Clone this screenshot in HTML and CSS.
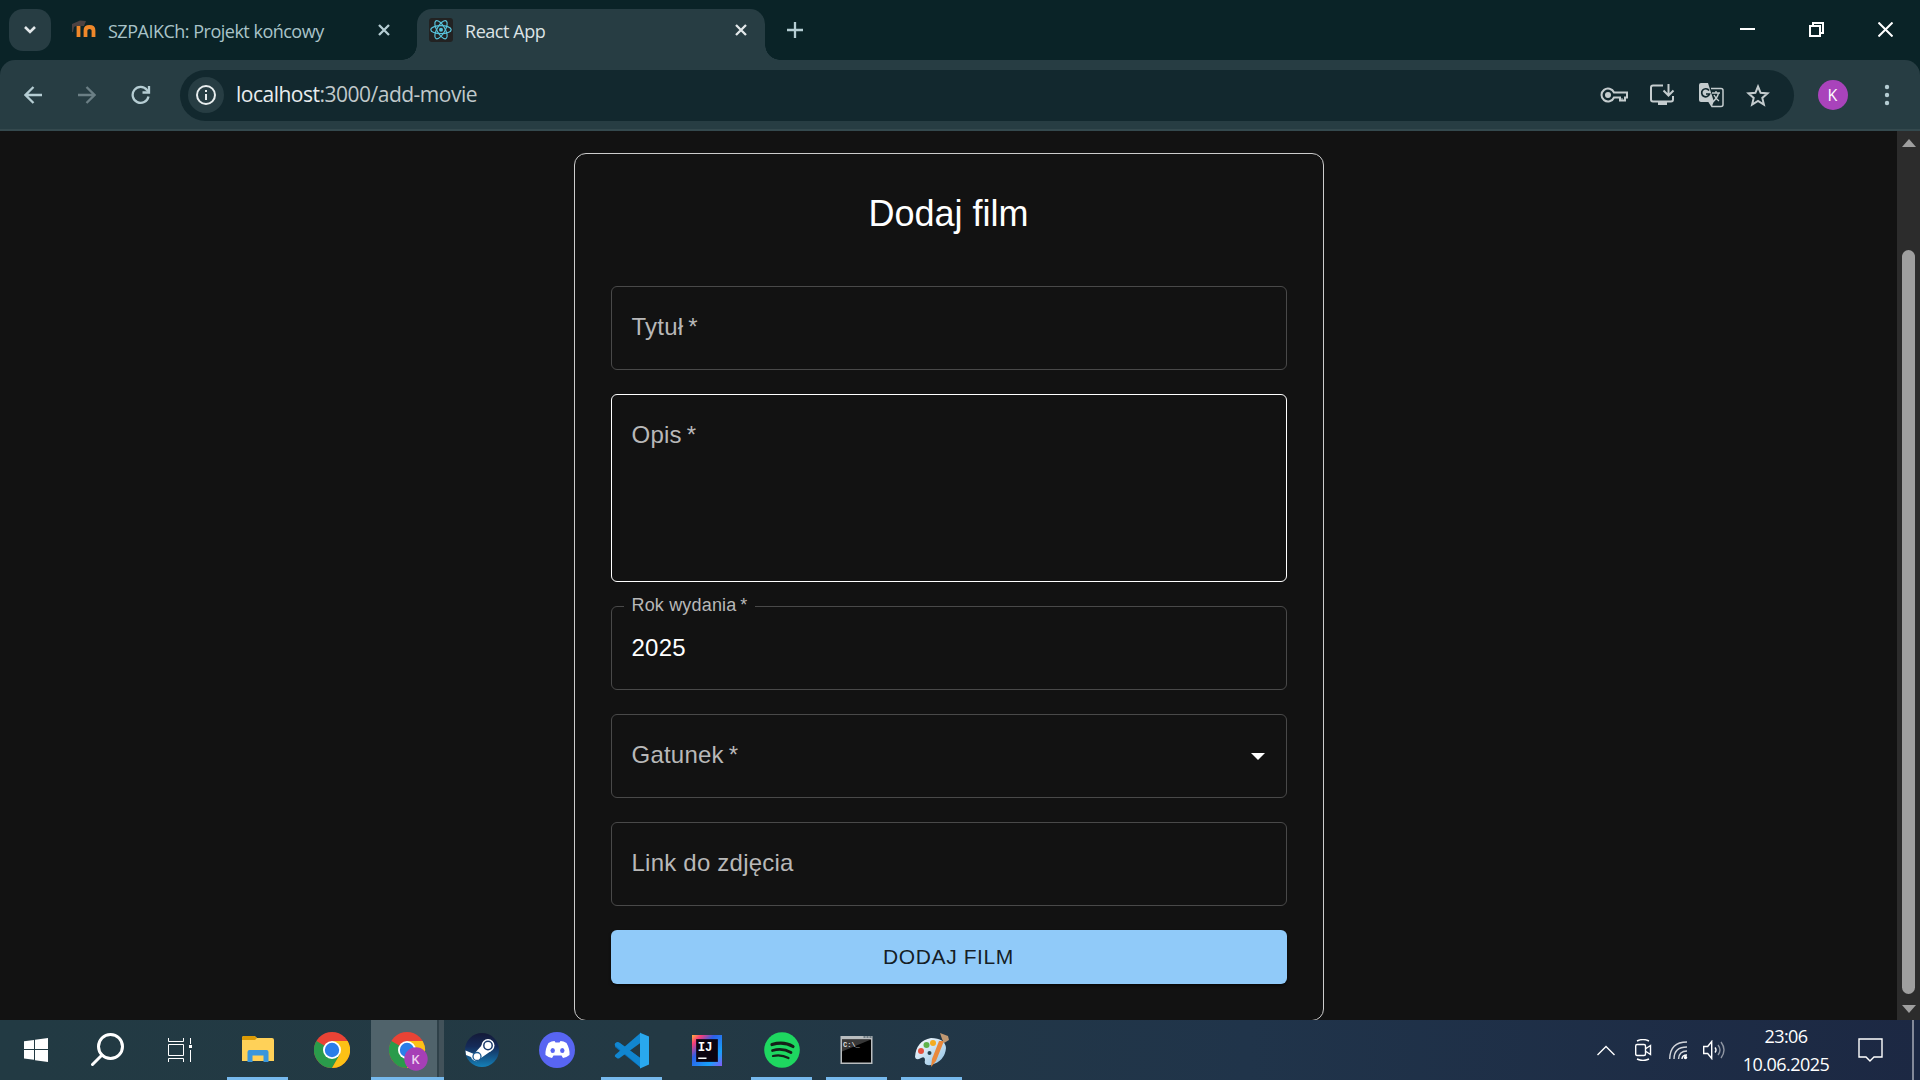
FILE: index.html
```html
<!DOCTYPE html>
<html lang="pl">
<head>
<meta charset="utf-8">
<title>React App</title>
<link rel="stylesheet" href="styles.css">
</head>
<body>
<header class="tabs">
  <div class="tab-search"><svg width="14" height="10" viewBox="0 0 14 10"><path d="M2 2l5 5 5-5" class="ln b"/></svg></div>
  <div class="tab">
    <svg width="26" height="24" viewBox="0 0 26 24"><path d="M7.500 19V8M14.500 19v-6.500q0-3.500 4-3.500t4 3.500V19" fill="none" stroke="#f0882a" stroke-width="3.800"/><path d="M1 6l8-3.500 6 .5-2 5H5l-2 1-1 5H1z" fill="#4c4242"/></svg>
    <span class="tab-name first">SZPAIKCh: Projekt końcowy</span>
    <svg class="x" width="12" height="12" viewBox="0 0 12 12"><path d="M1 1l10 10M11 1L1 11" class="ln"/></svg>
  </div>
  <div class="tab active">
    <svg class="react" width="24" height="24" viewBox="0 0 24 24"><rect width="24" height="24" rx="3" fill="#222"/><g fill="none" stroke="#58c4dc" stroke-width="1.200"><ellipse cx="12" cy="11.700" rx="10.200" ry="4"/><ellipse cx="12" cy="11.700" rx="10.200" ry="4" transform="rotate(60 12 11.700)"/><ellipse cx="12" cy="11.700" rx="10.200" ry="4" transform="rotate(120 12 11.700)"/></g><circle cx="12" cy="11.700" r="2" fill="#58c4dc"/></svg>
    <span class="tab-name second">React App</span>
    <svg class="x" width="12" height="12" viewBox="0 0 12 12"><path d="M1 1l10 10M11 1L1 11" class="ln w"/></svg>
  </div>
  <svg class="plus" width="16" height="16" viewBox="0 0 16 16"><path d="M8 0v16M0 8h16" class="ln"/></svg>
  <div class="win">
    <svg width="15" height="16" viewBox="0 0 15 16"><path d="M0 7h15" stroke="#fff" stroke-width="2"/></svg>
    <svg width="15" height="15" viewBox="0 0 15 15"><path d="M1 4h10v10H1zM4 4V1h10v10h-3" fill="none" stroke="#fff" stroke-width="2"/></svg>
    <svg width="15" height="15" viewBox="0 0 15 15"><path d="M.5.500l14 14M14.500.500l-14 14" stroke="#fff" stroke-width="2"/></svg>
  </div>
</header>
<nav class="toolbar">
  <svg width="18" height="18" viewBox="0 0 18 18"><path d="M18 9H1.500M9.500 1l-8 8 8 8" class="ln"/></svg>
  <svg width="18" height="18" viewBox="0 0 18 18"><path d="M0 9h16.500M8.500 1l8 8-8 8" class="ln dim"/></svg>
  <svg width="20" height="20" viewBox="0 0 20 20"><path d="M17.500 11.500A8 8 0 1 1 16 5l2 2" class="ln"/><path d="M18 1v6.500h-6.500" class="ln"/></svg>
  <div class="address">
    <span class="info"><svg width="20" height="20" viewBox="0 0 20 20"><circle cx="10" cy="10" r="9" fill="none" stroke="#e8edee" stroke-width="2"/><path d="M10 9v6M10 5v2" stroke="#e8edee" stroke-width="2"/></svg></span>
    <span class="url"><b>localhost</b>:3000/add-movie</span>
    <div class="actions">
      <svg width="28" height="18" viewBox="0 0 28 18"><path d="M14 6.500h13v5h-2v3h-5v-3h-6a6.500 6.500 0 1 1 0-5z" fill="none" stroke="#c4ccce" stroke-width="2"/><circle cx="8" cy="9" r="3" fill="#c4ccce"/><path d="M22 12v3" stroke="#c4ccce"/></svg>
      <svg width="26" height="22" viewBox="1 0 26 22"><path d="M13 1.500H3Q1 1.500 1 3.500v12q0 2 2 2h18q2 0 2-2V12M18.500 0v11M13.500 6.500l5 5 5-5" transform="translate(1)" fill="none" stroke="#c4ccce" stroke-width="2"/><path d="M9 18h9v3H9z" fill="#c4ccce"/></svg>
      <svg width="25" height="25" viewBox="0 0 25 25"><path d="M12 5.500h10q2 0 2 2v14q0 2-2 2h-9l-3-5" fill="none" stroke="#c4ccce" stroke-width="1.500"/><path d="M2 0h7l6 19H2q-2 0-2-2V2q0-2 2-2zM10 18h5l-2 5z" fill="#c4ccce"/><path d="M10 7.500a4 4 0 1 0 .5 3.500H7" fill="none" stroke="#12282e" stroke-width="1.700"/><path d="M13 10h8M17 8v2M19.500 10q-1 5-6 9M15 12q2 4 5 6" fill="none" stroke="#c4ccce" stroke-width="1.400"/></svg>
      <svg width="24" height="23" viewBox="0 0 24 23"><path d="M12 2.500l2.600 6.300 6.900.6-5.200 4.500 1.600 6.700-5.900-3.600-5.900 3.600 1.600-6.700L2.500 9.400l6.900-.6z" fill="none" stroke="#c4ccce" stroke-width="2"/></svg>
    </div>
  </div>
  <span class="avatar">K</span>
  <svg class="dots" width="6" height="22" viewBox="0 0 6 22"><g fill="#b5cdd3"><circle cx="3" cy="3" r="2.200"/><circle cx="3" cy="11" r="2.200"/><circle cx="3" cy="19" r="2.200"/></g></svg>
</nav>
<main class="page">
  <div class="content">
    <form class="card">
      <h1>Dodaj film</h1>
      <div class="field">Tytuł&#8201;*</div>
      <div class="field area">Opis&#8201;*</div>
      <fieldset class="field filled"><legend>Rok wydania&#8201;*</legend>2025</fieldset>
      <div class="field">Gatunek&#8201;*<i class="arrow"></i></div>
      <div class="field">Link do zdjęcia</div>
      <button type="button">DODAJ FILM</button>
    </form>
  </div>
  <div class="scroll"><i class="up"></i><div class="thumb"></div><i class="down"></i></div>
</main>
<footer class="taskbar">
  <div class="slot start"><svg width="24" height="24" viewBox="0 0 24 24"><path d="M0 3.300L10 2v9H0zM11 1.800L24 0v11H11zM0 12h10v9.800L0 20.500zM11 12h13v12l-13-1.800z" fill="#fff"/></svg></div>
  <div class="slot start"><svg width="34" height="34" viewBox="0 0 34 34"><circle cx="19.500" cy="13.500" r="12" class="sw"/><path d="M11 22L1.500 31.500" class="sw"/></svg></div>
  <div class="slot view"><svg width="24" height="24" viewBox="0 0 24 24"><path d="M.5 0v3.500h15V0M.5 6.500h15v11H.5zM.5 24v-3.500h15V24M22.500 0v6M22.500 12v12" fill="none" stroke="#fff"/><path d="M21 7h3v3h-3z" fill="#fff"/></svg></div>
  <div class="slot explorer run"><svg width="32" height="28" viewBox="0 0 32 28"><path d="M0 2q0-2 2-2h10q1 0 3 2h15q2 0 2 2v21H0z" fill="#ffd158"/><path d="M0 4V2q0-2 2-2h10q1 0 3 2l-2 2z" fill="#dc9b05"/><path d="M5.500 26V16q0-2 2-2h17q2 0 2 2v10h-5v-6.500h-11V26z" fill="#3996dc"/></svg></div>
  <div class="slot chrome"><svg width="36" height="36" viewBox="0 0 36 36"><use href="#chrome"/></svg></div>
  <div class="slot current"><svg width="40" height="40" viewBox="0 0 40 40"><g id="chrome"><circle cx="18" cy="18" r="18" fill="#e94335"/><path d="M18 18L2.400 9A18 18 0 0 0 18 36l8-13.500z" fill="#2a9b4b"/><path d="M18 9h15.600A18 18 0 0 1 18 36l7.800-13.500z" fill="#fcc116"/><circle cx="18" cy="18" r="9" fill="#fff"/><circle cx="18" cy="18" r="7.200" fill="#2b7de9"/></g><circle cx="27" cy="27" r="11.700" fill="#a63fb6"/><text x="26.500" y="32" text-anchor="middle" class="badge">K</text></svg></div>
  <div class="slot"><svg width="34" height="34" viewBox="0 0 34 34"><defs><linearGradient id="st" x2="0" y2="1"><stop stop-color="#141a38"/><stop offset=".4" stop-color="#152b59"/><stop offset="1" stop-color="#1480b8"/></linearGradient></defs><circle cx="17" cy="17" r="17" fill="url(#st)"/><path d="M.5 17.500L9 21l8-9 9 6-10 7q-4 6-9 1l-1-2-5-2z" fill="#fff"/><circle cx="23" cy="12.500" r="6.500" fill="#fff"/><circle cx="23" cy="12.500" r="4.200" fill="#fff" stroke="#1b3a6b" stroke-width="1.500"/><circle cx="12" cy="23.500" r="4" fill="none" stroke="#1c5a91" stroke-width="1.300"/></svg></div>
  <div class="slot"><svg width="36" height="36" viewBox="0 0 36 36"><circle cx="18" cy="18" r="18" fill="#5865f2"/><path d="M9.500 11q3-2 6-2l1 1.500h4l1-1.500q3 0 6 2 3.500 6 3 12-3 2.500-6.500 3l-1.500-2.500h-8L13 26q-3.500-.5-6.500-3-.5-6 3-12z" fill="#fff"/><ellipse cx="13.700" cy="18.500" rx="2.200" ry="2.500" fill="#5865f2"/><ellipse cx="23.300" cy="18.500" rx="2.200" ry="2.500" fill="#5865f2"/></svg></div>
  <div class="slot run"><svg width="36" height="37" viewBox="0 0 36 36"><path d="M1 12.500l2.500-2.500 2 .2L27 26v9.500L1 14.500z" fill="#0a6fb8"/><path d="M1 22.500L27 0v10L5 26H3.500L.8 24z" fill="#1186d0"/><path d="M1 13q-1-2 1.500-3.300 1.500-.7 3 .5L27 26v9z" fill="#1186d0"/><path d="M26 .3L35 4v28l-9 4z" fill="#29a8ee"/></svg></div>
  <div class="slot"><svg width="30" height="31" viewBox="0 0 29 30"><defs><linearGradient id="ij" x2="1" y2="1"><stop stop-color="#ffb43c"/><stop offset=".16" stop-color="#fb3c78"/><stop offset=".38" stop-color="#2d5fe8"/><stop offset=".75" stop-color="#17a1fa"/><stop offset="1" stop-color="#8659f6"/></linearGradient></defs><path d="M0 0h29v30H0z" fill="url(#ij)"/><path d="M4 4h21v22H4z" fill="#0c0410"/><path d="M6 22.500h8" stroke="#fff" stroke-width="1.500"/><text x="5.500" y="15" class="ij">IJ</text></svg></div>
  <div class="slot run"><svg width="36" height="36" viewBox="0 0 36 36"><circle cx="18" cy="18" r="17.800" fill="#1ed760"/><g fill="none" stroke="#152018" stroke-linecap="round"><path d="M8 12.500q12-3.500 21 2" stroke-width="3.200"/><path d="M8.500 18.500q10-3 18.500 2" stroke-width="2.700"/><path d="M9 24q8-2 15.500 2" stroke-width="2.200"/></g></svg></div>
  <div class="slot run"><svg width="33" height="28" viewBox="0 0 32 28"><path d="M0 0h32v28H0z" fill="#b9bdbf"/><path d="M1.500 3.500h29v23h-29z" fill="#000"/><path d="M1.500 3.500h29l-29 12z" fill="#373737"/><path d="M23 1h2m1 0h2m1 0h2" stroke="#263b47"/><text x="2.500" y="11" class="cmd">C:\_</text></svg></div>
  <div class="slot run"><svg width="36" height="36" viewBox="0 0 36 36"><defs><linearGradient id="pa" x2="1" y2="1"><stop stop-color="#fff"/><stop offset="1" stop-color="#8fc1e4"/></linearGradient></defs><path d="M1 25Q2 9 17 6q14 0 15 10-1 13-15 17-8 1-6-5 0-4-4-2-5 3-6-1z" fill="url(#pa)"/><circle cx="7" cy="19" r="3" fill="#e6523f"/><circle cx="12.500" cy="13" r="3" fill="#5fb34b"/><circle cx="19" cy="11" r="3" fill="#f4ac1f"/><circle cx="15.500" cy="21" r="2" fill="#244350"/><path d="M30 9l-8 20-5 6 1-8 7-18z" fill="#e9883b"/><path d="M28 7l-2-6 8 3 1 4-5 3z" fill="#c09872"/></svg></div>
  <div class="tray">
    <svg width="18" height="11" viewBox="0 0 18 11"><path d="M.5 10L9 1.500l8.500 8.500" class="tr"/></svg>
    <svg width="17" height="22" viewBox="0 0 17 22"><path d="M2 2q6-3 12 0M2 20q6 3 12 0M2 5.500h7q1.500 0 1.500 1.500v8q0 1.500-1.500 1.500H2Q.7 16.500.7 15V7q0-1.500 1.300-1.500zM11 9.500l4.500-3v9l-4.500-3" class="tr"/></svg>
    <svg width="19" height="19" viewBox="0 0 19 19"><path d="M.7 18Q1 1 18 1M5 18Q5 6 18 6M9.500 18Q10 10 18 10" class="tr" opacity=".8"/><path d="M13 18q0-4 5-4" class="tr"/><circle cx="16.500" cy="16.500" r="1.700" fill="#fff"/></svg>
    <svg width="23" height="20" viewBox="0 0 23 20"><path d="M.7 6.500h4l4-5v17l-4-5h-4zM12 7.500q2 2.500 0 5" class="tr"/><path d="M15 5q4 5 0 10M18 2q6 8 0 16" class="tr" opacity=".5"/></svg>
    <div class="clock"><span>23:06</span><span>10.06.2025</span></div>
    <svg width="25" height="25" viewBox="0 0 25 25"><path d="M1 1h23v18h-8l-4 4-4-4H1z" class="tr"/></svg>
    <i class="desk"></i>
  </div>
</footer>
</body>
</html>
```
FILE: styles.css
```css
* { box-sizing: border-box; }
body { margin: 0; height: 1080px; display: flex; flex-direction: column; overflow: hidden; background: #0a2327; font-family: "Open Sans", sans-serif; }
svg { display: block; flex: none; }
.ln { fill: none; stroke: #b5cdd3; stroke-width: 2.3; }
.ln.w, .ln.b { stroke: #e2e8ea; }
.ln.b { stroke-width: 2.6; }
.ln.dim { stroke: #6b7f85; }

.tabs { height: 60px; flex: none; display: flex; align-items: flex-start; padding: 9px 27px 0 9px; }
.tab-search { width: 42px; height: 42px; border-radius: 14px; background: #273d43; display: flex; align-items: center; justify-content: center; }
.tab { height: 51px; width: 366px; display: flex; align-items: center; padding: 0 27px 9px 20px; }
.tab-name { font-size: 18px; line-height: 24px; white-space: nowrap; padding-top: 2px; }
.first { color: #a9c3c9; margin-left: 11px; letter-spacing: -0.5px; }
.second { color: #dce3e5; margin-left: 12px; letter-spacing: -0.45px; }
.x { margin-left: auto; }
.tab.active { width: 348px; position: relative; background: #273d43; border-radius: 15px 15px 0 0; padding: 0 18px 9px 12px; }
.tab.active::before, .tab.active::after { content: ""; position: absolute; bottom: 0; width: 15px; height: 15px; }
.tab.active::before { left: -15px; background: radial-gradient(circle at 0 0, transparent 14.5px, #273d43 15px); }
.tab.active::after { right: -15px; background: radial-gradient(circle at 100% 0, transparent 14.5px, #273d43 15px); }
.plus { margin: 13px 0 0 22px; }
.win { margin-left: auto; display: flex; gap: 54px; padding-top: 13px; }

.toolbar { height: 71px; flex: none; background: #273d43; border-radius: 15px 15px 0 0; box-shadow: inset 0 -2px #34494e; display: flex; align-items: center; padding: 0 30px 1px 24px; }
.toolbar > svg:nth-child(2) { margin-left: 36px; }
.toolbar > svg:nth-child(3) { margin-left: 35px; }
.address { height: 51px; width: 1614px; margin-left: 29px; border-radius: 26px; background: #12282e; display: flex; align-items: center; padding: 0 24px 0 8px; }
.info { width: 36px; height: 36px; border-radius: 50%; background: #273d43; display: flex; align-items: center; justify-content: center; }
.url { margin-left: 12px; padding-bottom: 2px; color: #c0c9cb; font-size: 21px; letter-spacing: -0.5px; }
.url b { font-weight: 400; color: #e8edee; }
.actions { margin-left: auto; display: flex; align-items: center; gap: 22.5px; }
.avatar { width: 30px; height: 30px; margin-left: 24px; border-radius: 50%; background: #a943bb; color: #fff; font-size: 16px; line-height: 30px; text-align: center; padding-right: 1px; }
.dots { margin-left: auto; }

.page { height: 889px; flex: none; display: flex; background: #121212; overflow: hidden; font-family: "Liberation Sans", Arial, sans-serif; }
.content { flex: 1; padding-top: 22px; }
.card { width: 750px; height: 868px; margin: 0 auto; border: 1px solid #ccc; border-radius: 12px; padding: 36px; display: flex; flex-direction: column; gap: 24px; }
h1 { margin: 0 0 24px; height: 48px; font-size: 36px; font-weight: 400; line-height: 48px; text-align: center; color: #fff; }
.field { height: 84px; flex: none; margin: 0; border: 1px solid #494949; border-radius: 6px; padding: 0 21px 2px 20px; color: #b8b8b8; font-size: 24px; letter-spacing: .225px; line-height: 80px; display: flex; align-items: center; justify-content: space-between; }
.area { height: 188px; border-color: #fff; align-items: flex-start; }
.filled { display: block; height: 96px; margin-top: -12px; padding: 0 12px; color: #fff; line-height: 59px; text-indent: 8px; min-width: 0; }
.filled legend { height: 24px; line-height: 22px; padding: 0 8px; font-size: 18px; letter-spacing: .17px; text-indent: 0; color: #b8b8b8; }
.arrow { border: 7.5px solid transparent; border-top-color: #fff; border-bottom: 0; position: relative; top: 1px; }
button { height: 54px; flex: none; border: 0; border-radius: 6px; background: #90caf9; color: rgba(0,0,0,.87); font: 21px "Liberation Sans", Arial, sans-serif; letter-spacing: .6px; box-shadow: 0 2px 3px #0008; }
.scroll { width: 23px; background: #2c2c2c; display: flex; flex-direction: column; align-items: center; }
.up, .down { border: 7.5px solid transparent; flex: none; }
.up { margin-top: 8px; border-bottom: 8px solid #9f9f9f; border-top: 0; }
.thumb { width: 13px; height: 744px; margin-top: 103px; border-radius: 7px; background: #9f9f9f; }
.down { margin-top: 11px; border-top: 8px solid #9f9f9f; border-bottom: 0; }

.taskbar { height: 60px; flex: none; display: flex; background: linear-gradient(90deg, #223a43 0%, #233944 35%, #20344a 65%, #1c2843 100%); }
.slot { width: 75px; flex: none; display: flex; align-items: center; justify-content: center; position: relative; }
.start { width: 72px; }
.view { width: 77px; padding-right: 5px; }
.explorer { width: 73px; }
.chrome { width: 77px; padding-right: 1px; }
.current { width: 73px; background: linear-gradient(90deg, #50636b 66px, #2f4149 66px, #2f4149 68px, #42525a 68px); box-shadow: inset 0 -3px #76b9ed; padding: 3px 0 0 3px; }
.run::after { content: ""; position: absolute; left: 7px; width: 61px; bottom: 0; height: 3px; background: #76b9ed; }
.explorer::after { left: 6px; }
.sw { fill: none; stroke: #fff; stroke-width: 3; stroke-linecap: round; }
.badge { fill: #eed3f1; font: 600 13px "Open Sans", sans-serif; }
.ij { fill: #fff; font: bold 12px "Liberation Mono", monospace; }
.cmd { fill: #ddd; font: bold 7px "Liberation Mono", monospace; }
.tr { fill: none; stroke: #fff; stroke-width: 1.4; }
.tray { margin-left: auto; display: flex; align-items: center; padding-right: 6px; }
.tray > svg:nth-child(2) { margin-left: 20px; }
.tray > svg:nth-child(3) { margin-left: 17px; }
.tray > svg:nth-child(4) { margin-left: 15px; }
.clock { width: 106px; margin-left: 7px; display: flex; flex-direction: column; align-items: center; color: #fff; font-size: 18px; line-height: 28px; letter-spacing: -0.55px; padding-bottom: 1px; }
.clock + svg { margin-left: 19px; }
.desk { width: 2px; height: 60px; margin-left: 29px; background: #838999; }
```
